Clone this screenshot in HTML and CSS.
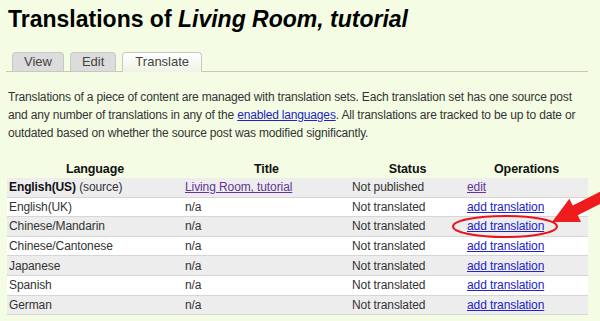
FILE: index.html
```html
<!DOCTYPE html>
<html lang="en">
<head>
    <meta charset="UTF-8">
    <title>Translations of Living Room, tutorial</title>
    <link rel="stylesheet" href="styles.css">
</head>
<body>

<div class="page">
    <h1 class="titulo">Translations of <em>Living Room, tutorial</em></h1>

    <!-- Pestañas -->
    <ul class="tabs">
        <li class="tab">View</li>
        <li class="tab">Edit</li>
        <li class="tab active">Translate</li>
    </ul>

    <p class="texto">
        <span class="linea">Translations of a piece of content are managed with translation sets. Each translation set has one source post</span>
        <span class="linea">and any number of translations in any of the <a href="#">enabled languages</a>. All translations are tracked to be up to date or</span>
        <span class="linea">outdated based on whether the source post was modified significantly.</span>
    </p>

    <table class="traducciones">
        <thead>
            <tr>
                <th class="col-lang">Language</th>
                <th class="col-title">Title</th>
                <th class="col-status">Status</th>
                <th class="col-ops">Operations</th>
            </tr>
        </thead>
        <tbody>
            <tr class="odd">
                <td><b>English(US)</b> (source)</td>
                <td><a class="visited" href="#">Living Room, tutorial</a></td>
                <td>Not published</td>
                <td><a class="visited" href="#">edit</a></td>
            </tr>
            <tr class="even">
                <td>English(UK)</td>
                <td>n/a</td>
                <td>Not translated</td>
                <td><a href="#">add translation</a></td>
            </tr>
            <tr class="odd">
                <td>Chinese/Mandarin</td>
                <td>n/a</td>
                <td>Not translated</td>
                <td><a href="#">add translation</a></td>
            </tr>
            <tr class="even">
                <td>Chinese/Cantonese</td>
                <td>n/a</td>
                <td>Not translated</td>
                <td><a href="#">add translation</a></td>
            </tr>
            <tr class="odd">
                <td>Japanese</td>
                <td>n/a</td>
                <td>Not translated</td>
                <td><a href="#">add translation</a></td>
            </tr>
            <tr class="even">
                <td>Spanish</td>
                <td>n/a</td>
                <td>Not translated</td>
                <td><a href="#">add translation</a></td>
            </tr>
            <tr class="odd">
                <td>German</td>
                <td>n/a</td>
                <td>Not translated</td>
                <td><a href="#">add translation</a></td>
            </tr>
        </tbody>
    </table>

    <!-- Flecha y círculo rojos encima de la tabla -->
    <svg class="anotacion" width="600" height="321" viewBox="0 0 600 321">
        <ellipse cx="505" cy="226.5" rx="52" ry="10.5" fill="none" stroke="#e8141a" stroke-width="2"/>
        <polygon fill="#ee1c1c" points="552,222 569.4,198.8 572.7,205.5 608.5,187.6 613.4,197.4 577.7,215.3 581,222"/>
    </svg>
</div>

</body>
</html>
```

FILE: styles.css
```css
body {
    margin: 0;
    padding: 0;
    background-color: #f4fde4;
    font-family: "Liberation Sans", Arial, sans-serif;
    color: #333;
}

.page {
    position: relative;
    width: 600px;
    height: 321px;
    overflow: hidden;
    padding: 0 0 0 8px;
    box-sizing: border-box;
}

.titulo {
    margin: 0;
    padding-top: 5px;
    font-size: 23px;
    line-height: 28px;
    color: #000;
}

/* Pestañas */
.tabs {
    list-style: none;
    display: flex;
    gap: 6px;
    margin: 19px 12px 0 -2px;
    padding: 0 0 0 6px;
    border-bottom: 1px solid #c8c8c0;
    height: 19px;
    align-items: flex-end;
}

.tab {
    height: 18px;
    line-height: 18px;
    padding: 0 11px;
    font-size: 13px;
    color: #444;
    background-color: #dcdcdc;
    border: 1px solid #c8c8c8;
    border-bottom: none;
    border-radius: 4px 4px 0 0;
}

.tab.active {
    background: linear-gradient(#ffffff, #eef4e4);
    padding: 0 12px;
    margin-bottom: -1px;
    height: 19px;
}

.texto {
    margin: 16px 0 0 0;
    font-size: 12px;
    letter-spacing: -0.17px;
    line-height: 18px;
}

.linea {
    display: block;
    white-space: nowrap;
}

a {
    color: #2222cc;
}

a.visited {
    color: #663399;
}

/* Tabla */
.traducciones {
    margin: 19px 0 0 -1px;
    border-collapse: collapse;
    font-size: 12px;
    letter-spacing: -0.1px;
    width: 581px;
}

.traducciones th {
    height: 17px;
    padding: 0;
    font-weight: bold;
    font-size: 12.5px;
    color: #111;
    text-align: center;
    line-height: 15px;
}

.col-lang { width: 176px; }
.col-title { width: 167px; }
.col-status { width: 115px; }
.col-ops { width: 123px; }

.traducciones td {
    height: 18.6px;
    padding: 0 0 0 2px;
    line-height: 16px;
    border-bottom: 1px solid #d6d6d6;
}

.traducciones td b {
    color: #111;
}

.odd { background-color: #ededed; }
.even { background-color: #ffffff; }

.anotacion {
    position: absolute;
    top: 0;
    left: 0;
}
```
